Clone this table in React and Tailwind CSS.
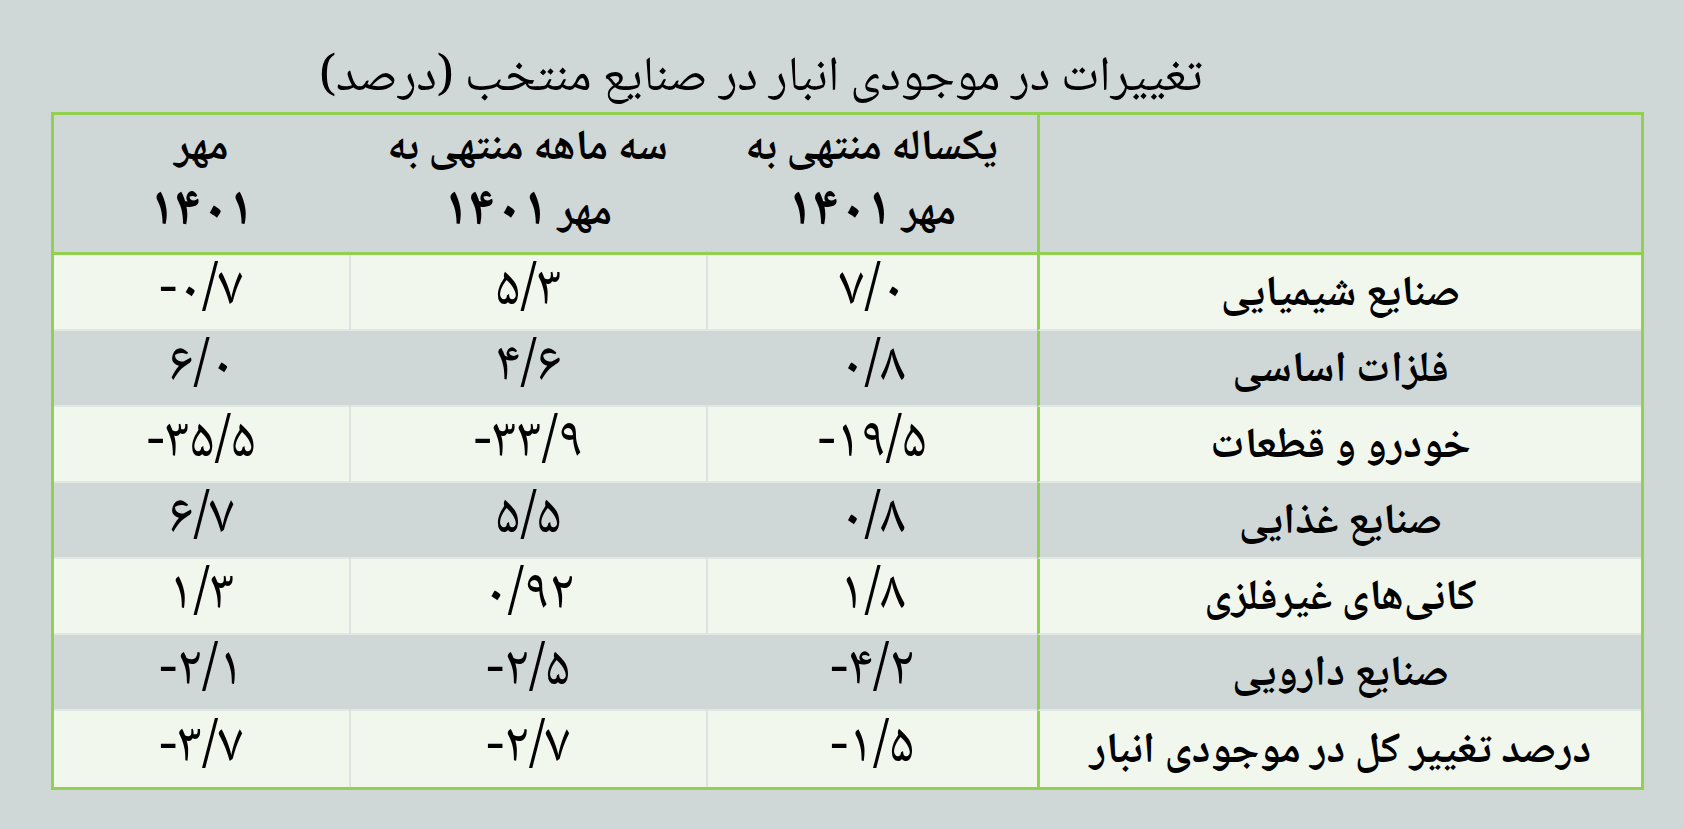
import React from "react";

const rows = [
  ["صنایع شیمیایی", "۷/۰", "۵/۳", "-۰/۷"],
  ["فلزات اساسی", "۰/۸", "۴/۶", "۶/۰"],
  ["خودرو و قطعات", "-۱۹/۵", "-۳۳/۹", "-۳۵/۵"],
  ["صنایع غذایی", "۰/۸", "۵/۵", "۶/۷"],
  ["کانی‌های غیرفلزی", "۱/۸", "۰/۹۲", "۱/۳"],
  ["صنایع دارویی", "-۴/۲", "-۲/۵", "-۲/۱"],
  ["درصد تغییر کل در موجودی انبار", "-۱/۵", "-۲/۷", "-۳/۷"],
];

const font = { fontFamily: '"Noto Naskh Arabic", "Noto Sans Arabic", "DejaVu Sans", sans-serif' };

export default function App() {
  return (
    <div className="w-[1684px] h-[829px] bg-[#cfd8d7] text-black overflow-hidden" style={font}>
      <div className="h-[112px] flex items-end pb-[8px] pl-[319px]">
        <div dir="rtl" className="text-[49px] leading-none whitespace-nowrap">
          تغییرات در موجودی انبار در صنایع منتخب (درصد)
        </div>
      </div>
      <div className="ml-[51px] w-[1593px] border-[3px] border-[#92d050]">
        <div dir="rtl" className="grid grid-cols-[604px_331px_357px_295px]">
          <div className="h-[140px] bg-[#cfd8d7] border-l-[3px] border-[#92d050] border-b-[3px]" />
          {[
            ["یکساله منتهی به", "مهر ", "۱۴۰۱"],
            ["سه ماهه منتهی به", "مهر ", "۱۴۰۱"],
            ["مهر", "", "۱۴۰۱"],
          ].map((h, i) => (
            <div
              key={i}
              className="h-[140px] bg-[#cfd8d7] border-b-[3px] border-[#92d050] flex flex-col items-center justify-center gap-[10px] font-bold text-[43px]"
            >
              <div className="leading-[50px]">{h[0]}</div>
              <div className="leading-[54px]">
                {h[1]}
                <span className="text-[54px]">{h[2]}</span>
              </div>
            </div>
          ))}
          {rows.map((r, ri) => {
            const light = ri % 2 === 0;
            const bg = light ? "bg-[#f2f7ee]" : "bg-[#cfd8d7]";
            const last = ri === rows.length - 1;
            const sep = last ? "" : "border-b-2 border-b-[#e1e7e3]";
            return (
              <React.Fragment key={ri}>
                <div
                  className={`h-[76px] ${bg} ${sep} border-l-[3px] border-l-[#92d050] flex items-center justify-center font-bold text-[43px] leading-none pt-[6px]`}
                >
                  {r[0]}
                </div>
                {r.slice(1).map((v, ci) => (
                  <div
                    key={ci}
                    className={`h-[76px] ${bg} ${sep} ${
                      ci < 2 ? (light ? "border-l-2 border-l-[#dde3df]" : "border-l-2 border-l-[#cfd8d7]") : ""
                    } flex items-center justify-center text-[56px] leading-none`}
                  >
                    <span dir="ltr">{v}</span>
                  </div>
                ))}
              </React.Fragment>
            );
          })}
        </div>
      </div>
    </div>
  );
}
